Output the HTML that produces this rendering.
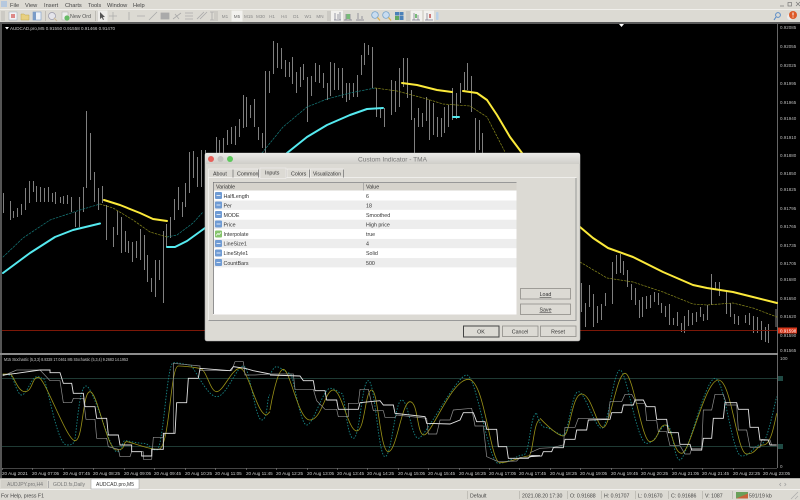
<!DOCTYPE html>
<html><head><meta charset="utf-8"><style>
html,body{margin:0;padding:0;width:800px;height:500px;overflow:hidden;background:#dcdad3}
svg{display:block;filter:blur(.3px)}
text{font-family:"Liberation Sans",sans-serif;font-size:5.3px;fill:#333}
.ax text{fill:#bbb;font-size:4.5px}
.tm text{fill:#ccc;font-size:4.6px}
.m text{font-size:5.7px;fill:#444}
.tf text{font-size:4.6px;fill:#888}
.d text{font-size:5.3px;fill:#333}
.sb text{font-size:5.2px;fill:#444}
.sq{vector-effect:non-scaling-stroke;fill:none}
</style></head><body>
<svg width="800" height="500" viewBox="0 0 800 500" xmlns="http://www.w3.org/2000/svg">
<defs><linearGradient id="tb" x1="0" y1="0" x2="0" y2="1"><stop offset="0" stop-color="#ecebe8"/><stop offset="1" stop-color="#cfcec9"/></linearGradient></defs>
<rect width="800" height="500" fill="#dcdad3"/>
<!-- menu -->
<rect x="1" y="1" width="6" height="6" fill="#b5c8de"/>
<g class="m"><text x="10" y="7">File</text><text x="25" y="7">View</text><text x="44" y="7">Insert</text><text x="65" y="7">Charts</text><text x="88" y="7">Tools</text><text x="107" y="7">Window</text><text x="133" y="7">Help</text></g>
<g fill="none" stroke="#777" stroke-width=".7"><path d="M780 6h4"/><rect x="788" y="2.500" width="3.500" height="3.500"/><path d="M796 2l4 4m0-4l-4 4"/></g>
<path d="M0 9.500H800" stroke="#f0efeb"/>
<!-- toolbar -->
<path d="M2 11v10M4 11v10M95.500 11v10M97.500 11v10M215 11v10M217 11v10M328 11v10M330 11v10M407 11v10M409 11v10" stroke="#b0aea8" stroke-width=".7"/>
<rect x="9" y="12" width="8" height="8" fill="#f2f2f6" stroke="#9ab" stroke-width=".5"/><rect x="11" y="14" width="4" height="4" fill="#d88"/>
<path d="M21 14h3l1 1h4v5h-8z" fill="#e8d080" stroke="#c0a850" stroke-width=".5"/>
<rect x="33" y="12" width="8" height="8" fill="#eef2f8" stroke="#7a9cc8" stroke-width=".6"/><rect x="33" y="12" width="3" height="8" fill="#7a9cc8"/>
<path d="M45.500 11v10" stroke="#c0bdb6"/>
<circle cx="52" cy="16" r="3.500" fill="#e4e4ea" stroke="#99a" stroke-width=".7"/><path d="M54 18l3 3" stroke="#cb9" stroke-width="1.100"/>
<rect x="62" y="12" width="6" height="8" fill="#eee" stroke="#aaa" stroke-width=".5"/><circle cx="67" cy="18" r="2.600" fill="#6b6"/>
<text x="70" y="18" style="font-size:5.700px;fill:#555" textLength="21" lengthAdjust="spacingAndGlyphs">New Ord</text>
<rect x="97.500" y="10.500" width="10" height="11" fill="#eeedea"/>
<path d="M100 12v7l1.800-1.500 1.200 2.500 1-.5-1.200-2.400 2.200-.1z" fill="#555"/>
<path d="M113 12v8M109 16h8" stroke="#aaa" stroke-width=".7"/>
<g stroke="#aaa" stroke-width=".8" fill="none"><path d="M129 12v8M137 16h8M149 20l8-8"/><rect x="161" y="13" width="8" height="6" fill="#aaa"/><path d="M173 19l8-6M175 14l4 5"/><path d="M185 13h8M185 16h8M185 19h8M197 19l7-7M200 19l7-7"/><path d="M210 12h4M212 12v8M210 20h4"/></g>
<rect x="231.500" y="10.500" width="11" height="11" fill="#f2f1ee"/>
<g class="tf" text-anchor="middle"><text x="225" y="18">M1</text><text x="237" y="18" style="fill:#666">M5</text><text x="248.500" y="18">M15</text><text x="260.500" y="18">M30</text><text x="272" y="18">H1</text><text x="284" y="18">H4</text><text x="296" y="18">D1</text><text x="308" y="18">W1</text><text x="320" y="18">MN</text></g>
<rect x="331" y="10.500" width="12" height="11" fill="#f2f1ee"/>
<g fill="none" stroke="#778" stroke-width=".7"><path d="M334 20h7M335 20v-7M338 19v-5M340 20v-8"/><path d="M344 20h8M346 20v-6M350 20v-6"/><path d="M356 20h8M358 19v-6M362 19v-3"/></g>
<rect x="346.500" y="14" width="3.500" height="5" fill="#7b7"/>
<circle cx="375" cy="15" r="3.300" fill="#c8dcf0" stroke="#6a9cc8" stroke-width=".7"/><path d="M377.500 17.500l2.500 3" stroke="#e0b050" stroke-width="1.300"/>
<circle cx="386" cy="15" r="3.300" fill="#c8dcf0" stroke="#6a9cc8" stroke-width=".7"/><path d="M388.500 17.500l2.500 3" stroke="#e0b050" stroke-width="1.300"/>
<rect x="395" y="12" width="4" height="3.500" fill="#4a80b8"/><rect x="399.500" y="12" width="4" height="3.500" fill="#4a80b8"/><rect x="395" y="16" width="4" height="4" fill="#60a860"/><rect x="399.500" y="16" width="4" height="4" fill="#4a80b8"/>
<rect x="411" y="10.500" width="11" height="11" fill="#f2f1ee"/><rect x="424" y="10.500" width="10" height="11" fill="#f2f1ee"/>
<path d="M412 20h8M414 20v-7M418 20v-5M425 20h8M427 20v-7" stroke="#778" stroke-width=".7"/><rect x="415" y="14" width="2" height="4" fill="#7b7"/><rect x="429" y="14" width="2" height="4" fill="#c77"/>
<rect x="436" y="12" width="2.500" height="8" rx="1" fill="#b8d0e8"/>
<circle cx="778" cy="15" r="2.400" fill="none" stroke="#5a8cc8" stroke-width="1"/><path d="M776 17l-2 3" stroke="#5a8cc8" stroke-width="1.100"/>
<circle cx="790" cy="17" r="3" fill="#ececec"/><circle cx="793" cy="15" r="4" fill="#dd5a28"/><path d="M793 12.500v3M793 16.500v1" stroke="#fff" stroke-width="1"/>
<!-- chart frame -->
<rect x="0" y="22" width="800" height="2" fill="#5a5a5a"/>
<rect x="0" y="24" width="800" height="454" fill="#000"/>
<rect x="0" y="24" width="2" height="454" fill="#555"/>
<path d="M777.500 24V468" stroke="#aaa" stroke-width=".6"/>
<path d="M619 24h5l-2.500 3z" fill="#fff"/>
<path d="M5 27h4l-2 2.500z" fill="#fff"/>
<text x="10" y="30" style="font-size:4.800px;fill:#ccc" textLength="105" lengthAdjust="spacingAndGlyphs">AUDCAD.pro,M5  0.91550 0.91558 0.91466 0.91470</text>
<!-- bars -->
<path stroke="#a0a0a0" stroke-width=".8" fill="none" d="M3.500 193V213M10.500 201V220M13.500 211V218M17.500 208V217M21.500 204V215M25.500 188V210M29.500 181V203M33.500 181V192M36.500 186V202M40.500 187V202M44.500 188V202M48.500 187V202M52.500 193V202M55.500 192V204M60.500 197V203M63.500 196V204M67.500 195V204M71.500 197V212M75.500 212V227M79.500 197V227M83.500 187V212M86.500 111V188M90.500 133V180M94.500 172V202M98.500 188V210M102.500 186V203M106.500 205V240M113.500 227V247M117.500 211V235M121.500 217V253M125.500 231V252M128.500 241V253M132.500 242V262M136.500 241V258M140.500 229V260M144.500 235V270M147.500 255V282M151.500 278V292M155.500 260V297M159.500 260V280M163.500 231V303M166.500 224V247M170.500 217V238M174.500 199V220M178.500 187V210M182.500 202V217M185.500 183V207M189.500 152V193M193.500 151V178M197.500 157V187M201.500 150V187M205.500 150V170M216.500 137V153M219.500 140V153M223.500 138V153M227.500 130V145M231.500 127V144M235.500 126V145M239.500 119V137M243.500 95V128M246.500 97V127M250.500 105V118M254.500 99V127M258.500 127V140M262.500 133V148M265.500 71V153M269.500 71V93M273.500 41V74M277.500 43V68M281.500 48V69M285.500 60V77M289.500 62V77M292.500 57V84M296.500 72V93M300.500 67V87M303.500 64V80M307.500 77V122M311.500 76V96M315.500 63V82M319.500 65V83M323.500 73V88M327.500 83V100M330.500 62V96M334.500 63V90M338.500 68V90M342.500 68V98M346.500 83V102M349.500 83V100M353.500 83V97M357.500 75V97M361.500 55V75M364.500 43V65M368.500 45V55M372.500 47V88M376.500 88V117M380.500 108V118M384.500 108V127M391.500 80V115M395.500 81V112M399.500 68V107M403.500 58V87M407.500 58V98M411.500 90V120M414.500 118V153M418.500 108V127M422.500 113V127M426.500 97V121M429.500 100V140M433.500 103V135M437.500 117V137M441.500 118V137M444.500 107V133M448.500 105V127M452.500 88V120M456.500 93V119M460.500 83V103M464.500 72V91M467.500 63V90M471.500 76V112M475.500 118V153M479.500 120V150M482.500 133V153M581.500 283V312M585.500 303V327M589.500 285V307M593.500 294V327M597.500 306V323M601.500 304V320M605.500 293V306M612.500 262V304M616.500 255V274M620.500 254V273M623.500 261V275M627.500 270V287M631.500 284V300M635.500 288V305M639.500 300V318M642.500 297V317M646.500 296V309M650.500 295V308M654.500 292V302M658.500 293V305M661.500 303V313M665.500 306V317M669.500 304V325M673.500 318V325M677.500 312V326M681.500 323V332M684.500 316V333M688.500 310V326M692.500 313V325M696.500 312V322M700.500 307V317M703.500 314V321M707.500 305V320M711.500 274V305M715.500 282V290M719.500 282V296M726.500 292V314M730.500 303V317M734.500 314V324M738.500 316V325M745.500 315V323M749.500 313V325M753.500 316V333M757.500 317V333M761.500 321V340M765.500 327V342M768.500 324V343M776 309V327"/>
<!-- red line -->
<path d="M2 330.500H777" stroke="#7c1808" stroke-width="1"/>
<!-- MA lines -->
<g fill="none" stroke-linejoin="round" stroke-linecap="round">
<g stroke="#167c7c" stroke-width=".7" stroke-dasharray="2 1.500"><path d="M3 257L23 238 50 220 80 210 100 204"/><path d="M167 237L177 235 193 223 203 212"/><path d="M262 153L283 127 307 107 327 99 350 93 375 88"/></g>
<g stroke="#8a8a1c" stroke-width=".7" stroke-dasharray="2 1.500"><path d="M100 204L113 208 133 220 150 232 167 237"/><path d="M375 88L397 91 427 99 443 104 470 106 487 117 505 152"/><path d="M580 262L607 278 633 282 663 292 693 304 707 305 733 303 753 308 777 317"/></g>
<g stroke="#55eaf0" stroke-width="2"><path d="M3 273L30 253 55 237 73 230 100 223.500"/><path d="M167 247L175 247 187 241 205 228"/><path d="M287 153L307 137 327 125 350 115 367 109 383 108"/><path d="M453 117H459"/></g>
<g stroke="#fbe93a" stroke-width="2"><path d="M104 200L120 205 140 213 153 219 167 221"/><path d="M402 83L417 85 437 90 452 92"/><path d="M463 91L477 93 487 100 497 115 510 137 522 153"/><path d="M580 227L593 238 608 248 633 257 663 272 693 285 707 288 733 292 753 297 777 303"/></g>
</g>
<!-- price axis -->
<g class="ax"><text x="780" y="29">0.92085</text><text x="780" y="48">0.92055</text><text x="780" y="67">0.92025</text><text x="780" y="85">0.91995</text><text x="780" y="104">0.91965</text><text x="780" y="120">0.91940</text><text x="780" y="139">0.91910</text><text x="780" y="157">0.91880</text><text x="780" y="175">0.91850</text><text x="780" y="191">0.91825</text><text x="780" y="210">0.91795</text><text x="780" y="228">0.91765</text><text x="780" y="247">0.91735</text><text x="780" y="265">0.91705</text><text x="780" y="281">0.91680</text><text x="780" y="300">0.91650</text><text x="780" y="318">0.91620</text><text x="780" y="337">0.91590</text><text x="780" y="352">0.91565</text></g>
<rect x="778" y="327.500" width="19" height="6" fill="#d8381c"/><text x="780" y="332.500" style="font-size:4.500px;fill:#fff">0.91598</text>
<!-- sub window -->
<rect x="0" y="353" width="778" height="2" fill="#8c8c8c"/>
<text x="4" y="361" style="font-size:4.600px;fill:#ccc" textLength="124" lengthAdjust="spacingAndGlyphs">M15 Stochastic (5,3,3) 8.8328 17.0461  M5 Stochastic (5,3,4) 9.2683 14.1953</text>
<path d="M2 378.500H777M2 446.500H777" stroke="#1f3a34" stroke-width="1"/>
<path d="M2 468.500H777" stroke="#888" stroke-width=".6"/>
<g class="ax"><text x="780" y="360">100</text><text x="780" y="468">0</text></g>
<rect x="778" y="376" width="5" height="5" fill="#1f4a44"/><rect x="778" y="444" width="5" height="5" fill="#1f4a44"/>
<!-- stochastic: zoom section 1 -->
<g transform="translate(0,350) scale(.33333)" fill="none">
<path class="sq" stroke="#178686" stroke-width=".9" stroke-dasharray="1.500 1.500" d="M8 72S20 75 30 75S50 135 65 135S95 80 110 80S120 85 130 85S170 285 200 285S215 275 222 275S235 108 258 108S330 305 350 305S365 272 375 272S410 280 430 280S450 300 470 300S500 38 520 38S560 45 570 45S620 140 650 140S710 48 730 48S765 210 785 210S800 135 810 135"/>
<path class="sq" stroke="#9a9218" stroke-width=".8" d="M8 72S20 72 30 72S52 125 75 125S95 82 115 82S200 272 225 272S247 125 270 125S320 300 350 300S368 275 380 275S440 298 475 298S510 48 535 48S580 52 600 55S630 125 650 125S695 55 720 55S770 195 800 195L810 185"/>
<polyline class="sq" stroke="#8f8f8f" stroke-width=".7" points="8,78 50,60 120,60 150,92 180,92 190,158 215,158 220,145 250,145 258,208 285,208 290,265 320,265 325,290 355,298 360,320 390,320 395,305 430,305 430,328 455,328 460,262 490,262 495,250 520,250 520,40 600,48 600,62 695,62 705,35 730,35 735,75 765,75 810,72"/>
<polyline class="sq" stroke="#e4e4e4" stroke-width=".9" points="8,75 50,70 120,60 150,60 150,68 180,68 190,100 215,100 220,130 250,130 255,170 285,170 290,205 320,205 325,255 355,255 360,285 395,285 395,305 425,305 425,318 455,318 455,298 490,298 490,250 525,250 530,158 560,158 565,85 595,85 600,55 690,62 700,50 735,55 760,62 810,72"/>
</g>
<!-- section 2 -->
<g transform="translate(270,350) scale(.33333)" fill="none">
<path class="sq" stroke="#178686" stroke-width=".9" stroke-dasharray="1.500 1.500" d="M0 75S10 50 20 50S50 70 60 70S90 225 110 225S160 115 180 115S205 130 215 130S230 265 250 265S275 92 295 92S325 320 345 320S375 150 395 150S425 265 445 265S560 75 590 75S655 340 685 340S740 315 760 315S780 190 800 190"/>
<path class="sq" stroke="#9a9218" stroke-width=".8" d="M0 180S20 58 40 58S85 210 120 210S165 120 190 120S235 243 260 243S285 120 305 120S330 305 355 305S395 155 420 155S440 255 462 255S545 88 595 88S660 338 690 338S760 318 775 318S790 210 810 210"/>
<polyline class="sq" stroke="#8f8f8f" stroke-width=".7" points="0,72 70,72 75,118 130,118 140,152 165,178 200,178 205,200 235,200 235,160 265,160 270,118 295,118 310,182 340,182 345,202 375,202 380,195 470,205 475,252 500,252 510,210 540,210 550,180 605,175 615,228 640,228 650,320 685,335 740,333 750,322 780,322 785,316 810,316"/>
<polyline class="sq" stroke="#e4e4e4" stroke-width=".9" points="0,75 90,78 100,92 130,92 135,122 165,122 170,150 200,150 205,178 265,178 270,158 330,152 340,165 370,165 375,190 465,200 470,220 540,222 570,210 580,188 610,188 620,215 645,215 650,238 680,238 685,290 710,290 715,325 775,325 780,318 810,318"/>
</g>
<!-- section 3 -->
<g transform="translate(530,350) scale(.33333)" fill="none">
<path class="sq" stroke="#178686" stroke-width=".9" stroke-dasharray="1.500 1.500" d="M20 190S30 232 45 232S85 255 100 255S125 125 145 125S195 235 215 235S250 60 270 60S320 280 350 280S390 225 410 225S430 330 450 330S525 85 555 85S605 318 635 318S670 285 690 285S725 200 740 140"/>
<path class="sq" stroke="#9a9218" stroke-width=".8" d="M30 205S80 258 100 258S125 132 155 132S200 232 220 232S260 70 285 70S335 275 360 275S385 225 405 225S430 310 455 310S525 90 565 90S620 312 650 312S680 285 700 285S730 240 740 190"/>
<polyline class="sq" stroke="#8f8f8f" stroke-width=".7" points="0,308 30,295 65,293 100,285 105,232 135,232 145,205 235,205 240,155 275,155 285,133 305,133 320,160 345,160 350,212 380,212 385,245 410,245 420,287 450,287 465,312 480,312 485,295 515,295 520,180 545,180 555,133 580,133 590,165 620,165 625,240 650,240 660,292 690,292 695,268 720,270 725,285 740,285"/>
<polyline class="sq" stroke="#e4e4e4" stroke-width=".9" points="0,320 35,318 40,305 65,305 70,293 100,293 105,268 135,268 140,240 170,240 175,210 240,208 245,188 275,188 280,165 310,165 315,150 340,150 350,170 375,170 380,208 410,208 415,248 445,248 450,283 480,283 485,300 515,300 520,265 545,265 550,205 580,205 585,158 620,158 625,178 655,178 660,232 685,232 690,270 715,270 720,285 740,285"/>
</g>
<!-- time axis -->
<path d="M2.500 468v2M32.500 468v2M63.500 468v2M93.500 468v2M124.500 468v2M154.500 468v2M185.500 468v2M215.500 468v2M246.500 468v2M276.500 468v2M307.500 468v2M337.500 468v2M367.500 468v2M398.500 468v2M428.500 468v2M459.500 468v2M489.500 468v2M519.500 468v2M550.500 468v2M580.500 468v2M611.500 468v2M641.500 468v2M672.500 468v2M702.500 468v2M733.500 468v2M763.500 468v2" stroke="#888" stroke-width=".6"/>
<g class="tm"><text x="2" y="475">20 Aug 2021</text><text x="32" y="475">20 Aug 07:05</text><text x="63" y="475">20 Aug 07:45</text><text x="93" y="475">20 Aug 08:25</text><text x="124" y="475">20 Aug 09:05</text><text x="154" y="475">20 Aug 09:45</text><text x="185" y="475">20 Aug 10:25</text><text x="215" y="475">20 Aug 11:05</text><text x="246" y="475">20 Aug 11:45</text><text x="276" y="475">20 Aug 12:25</text><text x="307" y="475">20 Aug 13:05</text><text x="337" y="475">20 Aug 13:45</text><text x="367" y="475">20 Aug 14:25</text><text x="398" y="475">20 Aug 15:05</text><text x="428" y="475">20 Aug 15:45</text><text x="459" y="475">20 Aug 16:25</text><text x="489" y="475">20 Aug 17:05</text><text x="519" y="475">20 Aug 17:45</text><text x="550" y="475">20 Aug 18:25</text><text x="580" y="475">20 Aug 19:05</text><text x="611" y="475">20 Aug 19:45</text><text x="641" y="475">20 Aug 20:25</text><text x="672" y="475">20 Aug 21:05</text><text x="702" y="475">20 Aug 21:45</text><text x="733" y="475">20 Aug 22:25</text><text x="763" y="475">20 Aug 23:05</text></g>
<!-- tabs -->
<rect x="0" y="478" width="800" height="12" fill="#dcdad3"/>
<path d="M0 478.500H800" stroke="#888" stroke-width=".6"/>
<path d="M0 489.500H800" stroke="#f2f1ee"/>
<rect x="1" y="480" width="46" height="8" fill="#d2d0c9"/>
<path d="M48.500 481v7" stroke="#aaa"/>
<rect x="91" y="479" width="48" height="10" fill="#fff" stroke="#999" stroke-width=".5"/>
<text x="7" y="486" style="font-size:5.200px;fill:#777" textLength="36" lengthAdjust="spacingAndGlyphs">AUDJPY.pro,H4</text>
<text x="53" y="486" style="font-size:5.200px;fill:#777" textLength="32" lengthAdjust="spacingAndGlyphs">GOLD.fs,Daily</text>
<text x="96" y="486" style="font-size:5.200px;fill:#333" textLength="38" lengthAdjust="spacingAndGlyphs">AUDCAD.pro,M5</text>
<path d="M781 483l-1.500 1.500 1.500 1.500M784.500 483l1.500 1.500-1.500 1.500" stroke="#999" stroke-width=".6" fill="none"/>
<!-- status -->
<g class="sb"><text x="1" y="497.500">For Help, press F1</text><text x="470" y="497.500">Default</text><text x="522" y="497.500">2021.08.20 17:30</text><text x="570" y="497.500">O: 0.91688</text><text x="604" y="497.500">H: 0.91707</text><text x="638" y="497.500">L: 0.91670</text><text x="671" y="497.500">C: 0.91686</text><text x="705" y="497.500">V: 1087</text><text x="749" y="497.500">591/19 kb</text></g>
<path d="M467.500 491v8M519.500 491v8M567.500 491v8M601.500 491v8M635.500 491v8M668.500 491v8M702.500 491v8M732.500 491v8" stroke="#b5b3ac" stroke-width=".7"/>
<rect x="736" y="492" width="12" height="6.500" fill="#6aa05a"/><path d="M736 498.500l12-5v5z" fill="#c8633a"/>
<path d="M791 499l7-7M795 499l3-3" stroke="#aaa" stroke-width=".7"/>
<!-- dialog -->
<rect x="205" y="153" width="375" height="188" rx="2" fill="#dcdad4" stroke="#aaa" stroke-width=".6"/>
<path d="M205 164V155a2 2 0 0 1 2-2H578a2 2 0 0 1 2 2V164z" fill="url(#tb)"/>
<circle cx="211" cy="159" r="3" fill="#e8605a"/><circle cx="220.500" cy="159" r="3" fill="#c4c3c0"/><circle cx="230" cy="159" r="3" fill="#5cc85a"/>
<text x="358" y="161.500" style="font-size:6.400px;fill:#777" textLength="69" lengthAdjust="spacingAndGlyphs">Custom Indicator - TMA</text>
<!-- tab panel -->
<rect x="208.500" y="177.500" width="367.500" height="143" fill="#dcdad4" stroke="#f4f3f0" stroke-width=".8"/>
<path d="M576 178V320.500H208.500" fill="none" stroke="#999" stroke-width="1"/>
<path d="M208.500 178V169h24.500v8.500M233 178V169h25v8.500M287 178V169h22v8.500M310.500 178V169h33v8.500" fill="none" stroke="#f2f1ee" stroke-width=".7"/>
<path d="M233 169.500v8M258.500 169.500v8M286 169.500v8M309.500 169.500v8M343.500 169.500v8" stroke="#777" stroke-width=".8"/>
<rect x="260" y="168" width="26" height="10.500" fill="#dcdad4" stroke="#f2f1ee" stroke-width=".6"/>
<g class="d"><text x="213" y="175.500">About</text><text x="237" y="175.500">Common</text><text x="265" y="174.500">Inputs</text><text x="291" y="175.500">Colors</text><text x="313" y="175.500" textLength="28" lengthAdjust="spacingAndGlyphs">Visualization</text></g>
<!-- list -->
<rect x="213" y="182" width="303.500" height="132.500" fill="#fff"/>
<path d="M213 182.500H516.500M213.500 182V314" stroke="#777" stroke-width=".8" fill="none"/>
<rect x="214" y="183" width="302.500" height="7.500" fill="#d6d3cc"/>
<path d="M363.500 183v7.500" stroke="#999" stroke-width=".7"/>
<rect x="214" y="200.500" width="302.500" height="9.300" fill="#ededed"/><rect x="214" y="219.700" width="302.500" height="9.300" fill="#ededed"/><rect x="214" y="238.900" width="302.500" height="9.300" fill="#ededed"/><rect x="214" y="258.100" width="302.500" height="9.300" fill="#ededed"/>
<g class="d"><text x="216" y="188.500">Variable</text><text x="366" y="188.500">Value</text>
<text x="223.500" y="198">HalfLength</text><text x="366" y="198">6</text>
<text x="223.500" y="207.500">Per</text><text x="366" y="207.500">18</text>
<text x="223.500" y="217">MODE</text><text x="366" y="217">Smoothed</text>
<text x="223.500" y="226.500">Price</text><text x="366" y="226.500">High price</text>
<text x="223.500" y="236">Interpolate</text><text x="366" y="236">true</text>
<text x="223.500" y="245.500">LineSize1</text><text x="366" y="245.500">4</text>
<text x="223.500" y="255">LineStyle1</text><text x="366" y="255">Solid</text>
<text x="223.500" y="265">CountBars</text><text x="366" y="265">500</text></g>
<g fill="#6f9bd3"><rect x="215" y="192" width="7" height="7" rx="1"/><rect x="215" y="201.500" width="7" height="7" rx="1"/><rect x="215" y="211" width="7" height="7" rx="1"/><rect x="215" y="220.500" width="7" height="7" rx="1"/><rect x="215" y="240" width="7" height="7" rx="1"/><rect x="215" y="249.500" width="7" height="7" rx="1"/><rect x="215" y="259" width="7" height="7" rx="1"/></g>
<rect x="215" y="230.500" width="7" height="7" rx="1" fill="#86c46c"/>
<g stroke="#fff" stroke-width=".8"><path d="M216.500 195.500h4M216.500 205h4M216.500 214.500h4M216.500 224h4M216.500 243.500h4M216.500 253h4M216.500 262.500h4"/><path d="M216 235.500l2-2 1 1 2-2" fill="none"/></g>
<!-- buttons -->
<g fill="#dcdad4" stroke="#8f8d88" stroke-width=".8"><rect x="520.500" y="288.500" width="50" height="10.500"/><rect x="520.500" y="304" width="50" height="10.500"/><rect x="502.500" y="326" width="35.500" height="10.500"/><rect x="540.500" y="326" width="35.500" height="10.500"/></g>
<rect x="463.500" y="326" width="35.500" height="11" fill="#dcdad4" stroke="#444" stroke-width="1"/>
<g class="d" text-anchor="middle"><text x="545.500" y="296" text-decoration="underline">Load</text><text x="545.500" y="311.500" text-decoration="underline">Save</text><text x="481" y="333.500">OK</text><text x="520" y="333.500">Cancel</text><text x="558" y="333.500">Reset</text></g>
</svg>
</body></html>
